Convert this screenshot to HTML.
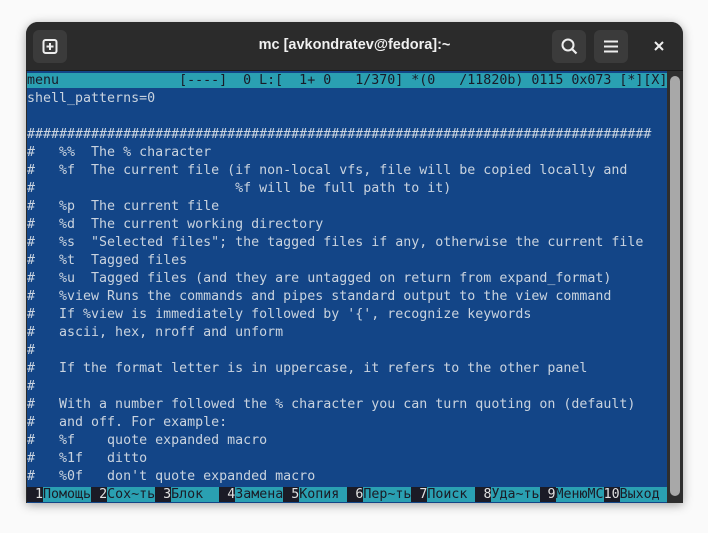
<!DOCTYPE html>
<html><head><meta charset="utf-8"><style>
html,body{margin:0;padding:0;width:708px;height:533px;background:#fafafa;overflow:hidden}
.win{position:absolute;left:26px;top:22px;width:657px;height:481px;border-radius:12px 12px 0 0;background:#2b2b2b;box-shadow:0 2px 10px rgba(0,0,0,.35);overflow:hidden}
.hdr{position:absolute;left:0;top:0;width:657px;height:48px;background:#2b2b2b;border-bottom:1px solid #1a1a1a}
.btn{position:absolute;top:8px;width:34px;height:33px;background:#3b3b3b;border-radius:6px}
.title{position:absolute;left:0;right:0;top:15px;text-align:center;color:#f0f0f0;font:bold 14.5px "Liberation Sans",sans-serif}
.term{position:absolute;left:1px;top:49px;width:640px;height:432px;background:#134587;overflow:hidden}
pre{margin:0;position:relative;top:1px;font-family:"DejaVu Sans Mono","Liberation Mono",monospace;font-size:13.3px;line-height:18px;color:#c9d3df;white-space:pre}
.bar{background:#2aa0b2;color:#1a1a28}
.k{background:#1b1b26;color:#e0e0e0}
.l{background:#2aa0b2;color:#1b1b26}
.sb{position:absolute;left:641px;top:49px;width:16px;height:432px;background:#2e2e2e}
.th{position:absolute;left:3px;top:5px;width:10px;height:420px;background:#a8a8a8;border-radius:5px}
</style></head><body>
<div class="win">
<div class="hdr">
<div class="btn" style="left:7px"><svg width="34" height="33"><rect x="10.5" y="10" width="13" height="13" rx="2" fill="none" stroke="#eee" stroke-width="2"/><path d="M17 13v7M13.5 16.5h7" stroke="#eee" stroke-width="2"/></svg></div>
<div class="title">mc [avkondratev@fedora]:~</div>
<div class="btn" style="left:526px"><svg width="34" height="33"><circle cx="16" cy="15" r="5.5" fill="none" stroke="#eee" stroke-width="2"/><path d="M20 19l4.5 4.5" stroke="#eee" stroke-width="2.2"/></svg></div>
<div class="btn" style="left:568px"><svg width="34" height="33"><path d="M10 11.5h14M10 16.5h14M10 21.5h14" stroke="#eee" stroke-width="2"/></svg></div>
<svg style="position:absolute;left:627px;top:18px" width="12" height="12"><path d="M2 2l8 8M10 2l-8 8" stroke="#eee" stroke-width="2"/></svg>
</div>
<div class="term"><pre><span class="bar">menu               [----]  0 L:[  1+ 0   1/370] *(0   /11820b) 0115 0x073 [*][X]</span>
shell_patterns=0

##############################################################################
#   %%  The % character
#   %f  The current file (if non-local vfs, file will be copied locally and
#                         %f will be full path to it)
#   %p  The current file
#   %d  The current working directory
#   %s  "Selected files"; the tagged files if any, otherwise the current file
#   %t  Tagged files
#   %u  Tagged files (and they are untagged on return from expand_format)
#   %view Runs the commands and pipes standard output to the view command
#   If %view is immediately followed by '{', recognize keywords
#   ascii, hex, nroff and unform
#
#   If the format letter is in uppercase, it refers to the other panel
#
#   With a number followed the % character you can turn quoting on (default)
#   and off. For example:
#   %f    quote expanded macro
#   %1f   ditto
#   %0f   don't quote expanded macro
<span class="k"> 1</span><span class="l">Помощь</span><span class="k"> 2</span><span class="l">Сох~ть</span><span class="k"> 3</span><span class="l">Блок  </span><span class="k"> 4</span><span class="l">Замена</span><span class="k"> 5</span><span class="l">Копия </span><span class="k"> 6</span><span class="l">Пер~ть</span><span class="k"> 7</span><span class="l">Поиск </span><span class="k"> 8</span><span class="l">Уда~ть</span><span class="k"> 9</span><span class="l">МенюMC</span><span class="k">10</span><span class="l">Выход </span></pre></div>
<div class="sb"><div class="th"></div></div>
</div>
</body></html>
